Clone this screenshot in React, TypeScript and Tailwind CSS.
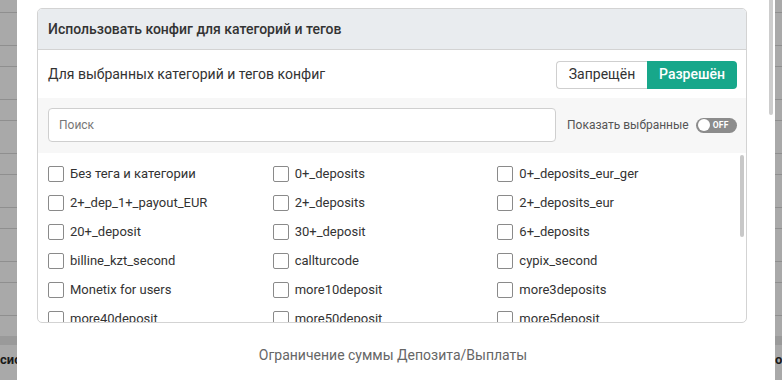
import React from "react";

const rows: [string, string, string][] = [
  ["Без тега и категории", "0+_deposits", "0+_deposits_eur_ger"],
  ["2+_dep_1+_payout_EUR", "2+_deposits", "2+_deposits_eur"],
  ["20+_deposit", "30+_deposit", "6+_deposits"],
  ["billine_kzt_second", "callturcode", "cypix_second"],
  ["Monetix for users", "more10deposit", "more3deposits"],
  ["more40deposit", "more50deposit", "more5deposit"],
];

function Backdrop({ text }: { text: string }) {
  const hs = [
    "h-[13px]",
    "h-[33px]",
    "h-[21px]",
    "h-[33px]",
    "h-[21px]",
    "h-[33px]",
    "h-[21px]",
    "h-[33px]",
    "h-[21px]",
    "h-[33px]",
    "h-[21px]",
    "h-[33px]",
  ];
  return (
    <div className="flex flex-col h-full overflow-hidden">
      {hs.map((h, i) => (
        <div key={i} className={`${h} shrink-0 border-b border-[#8f8f8f]`} />
      ))}
      <div className="h-[20px] shrink-0" />
      <div className="h-[9px] shrink-0 bg-[#9a9a9a]" />
      <div className="pt-[8px] text-[13px] font-bold text-[#1a1a1a] leading-[14px] whitespace-nowrap">
        {text}
      </div>
    </div>
  );
}

function Item({ label }: { label: string }) {
  return (
    <div className="flex items-center h-[29px]">
      <div className="w-[16px] h-[16px] border border-[#8a8a8a] rounded-[2px] bg-white shrink-0" />
      <span className="ml-[6px] text-[13px] text-[#333] whitespace-nowrap">{label}</span>
    </div>
  );
}

export default function App() {
  return (
    <div className="w-[782px] h-[380px] flex bg-[#a9a9a9] overflow-hidden font-['Roboto',sans-serif]">
      <div className="w-[17px] shrink-0 flex justify-end overflow-hidden">
        <div className="w-[17px]">
          <Backdrop text="сис" />
        </div>
      </div>
      <div className="w-[758px] shrink-0 bg-white relative pl-[20px] pr-[28px] pt-[8px]">
        <div className="h-[315px] border border-[#d3d3d3] rounded-[5px] overflow-hidden flex flex-col">
          <div className="h-[41px] shrink-0 bg-[#e9ecef] border-b border-[#d3d3d3] flex items-center px-[10px] text-[14px] font-medium text-[#333]">
            Использовать конфиг для категорий и тегов
          </div>
          <div className="h-[48px] shrink-0 flex items-center justify-between pl-[10px] pr-[9px]">
            <span className="text-[14px] text-[#333]">Для выбранных категорий и тегов конфиг</span>
            <div className="flex h-[28px] mt-[1px]">
              <div className="w-[91px] h-full flex items-center justify-center border border-[#cfcfcf] border-r-0 rounded-l-[4px] text-[14px] text-[#333]">
                Запрещён
              </div>
              <div className="w-[90px] h-full flex items-center justify-center bg-[#17a78a] rounded-r-[4px] text-[14px] font-medium text-white">
                Разрешён
              </div>
            </div>
          </div>
          <div className="h-[55px] shrink-0 bg-[#f7f7f7] flex items-center pl-[10px] pr-[10px] pb-[1px]">
            <div className="w-[508px] shrink-0 h-[34px] border border-[#cfcfcf] rounded-[4px] bg-white flex items-center px-[10px] text-[12px] text-[#777]">
              Поиск
            </div>
            <span className="ml-[11px] text-[12px] text-[#555] whitespace-nowrap">Показать выбранные</span>
            <div className="ml-[7px] shrink-0 w-[41px] h-[15px] rounded-full bg-[#8c8c8c] flex items-center pl-[2px] relative">
              <div className="w-[12px] h-[12px] rounded-full bg-white" />
              <span className="ml-[3px] text-[8.5px] font-bold text-white leading-none tracking-[0.2px]">OFF</span>
            </div>
          </div>
          <div className="relative flex-1 overflow-hidden pl-[10px] pt-[6px]">
            <div className="w-[674px] grid grid-cols-3">
              {rows.map((r, i) => (
                <React.Fragment key={i}>
                  <Item label={r[0]} />
                  <Item label={r[1]} />
                  <Item label={r[2]} />
                </React.Fragment>
              ))}
            </div>
            <div className="absolute right-[2px] top-[2px] w-[4px] h-[82px] rounded-full bg-[#c8c8c8]" />
          </div>
        </div>
        <div className="mt-[22px] text-center text-[14px] text-[#666] pl-[2px]">
          Ограничение суммы Депозита/Выплаты
        </div>
        <div className="absolute right-[2px] top-0 w-[4px] h-[115px] rounded-b-full bg-[#cdcdcd]" />
      </div>
      <div className="w-[7px] shrink-0 overflow-hidden">
        <Backdrop text="о:" />
      </div>
    </div>
  );
}
